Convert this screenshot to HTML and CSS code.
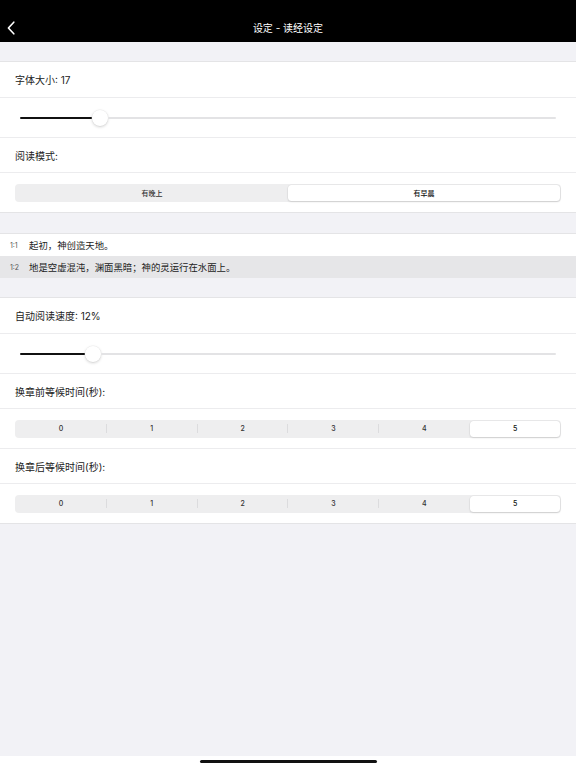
FILE: index.html
```html
<!DOCTYPE html>
<html lang="zh-CN">
<head>
<meta charset="utf-8">
<title>设定 - 读经设定</title>
<link rel="stylesheet" href="styles.css">
</head>
<body>
<div class="page">
  <header class="nav">
    <div class="nav-bar">
      <svg class="back" width="8" height="14" viewBox="0 0 8 14"><path d="M6.8 1.2 L1.4 7 L6.8 12.8" fill="none" stroke="#fff" stroke-width="1.6" stroke-linecap="round" stroke-linejoin="round"/></svg>
      <div class="title">设定 - 读经设定</div>
    </div>
  </header>

  <main class="content">
    <div class="gap gap-top"></div>
    <section class="group">
      <div class="row label-row">字体大小: 17</div>
      <div class="row control-row">
        <div class="slider">
          <div class="fill" style="width:72px"></div>
          <div class="thumb"></div>
          <div class="rest"></div>
        </div>
      </div>
      <div class="row label-row">阅读模式:</div>
      <div class="row control-row">
        <div class="seg">
          <div class="seg-item">有晚上</div>
          <div class="seg-item selected">有早晨</div>
        </div>
      </div>
    </section>

    <div class="gap"></div>
    <section class="group verses">
      <div class="verse"><span class="vnum">1:1</span><span class="vtext">起初，神创造天地。</span></div>
      <div class="verse hl"><span class="vnum">1:2</span><span class="vtext">地是空虚混沌，渊面黑暗；神的灵运行在水面上。</span></div>
    </section>

    <div class="gap gap-mid"></div>
    <section class="group">
      <div class="row label-row">自动阅读速度: 12%</div>
      <div class="row control-row">
        <div class="slider">
          <div class="fill" style="width:65px"></div>
          <div class="thumb"></div>
          <div class="rest"></div>
        </div>
      </div>
      <div class="row label-row">换章前等候时间(秒):</div>
      <div class="row control-row">
        <div class="seg">
          <div class="seg-item">0</div><div class="sep"></div>
          <div class="seg-item">1</div><div class="sep"></div>
          <div class="seg-item">2</div><div class="sep"></div>
          <div class="seg-item">3</div><div class="sep"></div>
          <div class="seg-item">4</div><div class="sep hidden"></div>
          <div class="seg-item selected">5</div>
        </div>
      </div>
      <div class="row label-row">换章后等候时间(秒):</div>
      <div class="row control-row">
        <div class="seg">
          <div class="seg-item">0</div><div class="sep"></div>
          <div class="seg-item">1</div><div class="sep"></div>
          <div class="seg-item">2</div><div class="sep"></div>
          <div class="seg-item">3</div><div class="sep"></div>
          <div class="seg-item">4</div><div class="sep hidden"></div>
          <div class="seg-item selected">5</div>
        </div>
      </div>
    </section>
  </main>

  <footer class="home">
    <div class="indicator"></div>
  </footer>
</div>
</body>
</html>
```

FILE: styles.css
```css
* { box-sizing: border-box; }
html, body { margin: 0; padding: 0; }
body {
  font-family: Inter, "Noto Sans CJK SC", "Noto Sans", sans-serif;
  color: #222;
  background: #f2f2f6;
}
.page {
  width: 576px;
  height: 768px;
  display: flex;
  flex-direction: column;
  overflow: hidden;
}
.nav {
  height: 42px;
  background: #000;
  flex: none;
  padding-top: 14px;
}
.nav-bar {
  height: 28px;
  display: flex;
  align-items: center;
  padding-left: 7px;
}
.back { display: block; }
.title {
  flex: 1;
  text-align: center;
  color: #fff;
  font-size: 10px;
  margin-left: -15px;
  margin-top: -2px;
}
.content {
  flex: 1;
  background: #f2f2f6;
}
.gap { height: 20px; }
.gap-top { height: 19px; }
.gap-mid { height: 19px; }
.group {
  background: #fff;
  border-top: 1px solid #e4e4e6;
  border-bottom: 1px solid #e4e4e6;
}
.row {
  display: flex;
  align-items: center;
}
.row + .row { border-top: 1px solid #ececee; }
.label-row {
  height: 35px;
  padding-left: 15px;
  font-size: 10px;
  color: #222;
}
.control-row {
  height: 40px;
}
.slider {
  margin: 0 20px;
  flex: 1;
  display: flex;
  align-items: center;
  height: 16px;
}
.fill {
  height: 2px;
  background: #111;
  border-radius: 1px;
}
.thumb {
  width: 16px;
  height: 16px;
  border-radius: 50%;
  background: #fff;
  box-shadow: 0 1px 3px rgba(0,0,0,0.18), 0 0 0 0.5px rgba(0,0,0,0.05);
  flex: none;
}
.rest {
  flex: 1;
  height: 2px;
  background: #e3e3e5;
  border-radius: 1px;
}
.seg {
  margin: 0 15px;
  flex: 1;
  height: 18px;
  background: #eeeeef;
  border-radius: 4px;
  padding: 1px;
  display: flex;
  align-items: center;
}
.seg-item {
  flex: 1;
  height: 16px;
  display: flex;
  align-items: center;
  justify-content: center;
  font-size: 7px;
  font-weight: 500;
  color: #333;
  border-radius: 3.5px;
}
.seg-item.selected {
  background: #fff;
  box-shadow: 0 1px 2px rgba(0,0,0,0.12), 0 0 0 0.5px rgba(0,0,0,0.05);
  color: #111;
}
.sep {
  width: 1px;
  height: 9px;
  background: #dcdcde;
  flex: none;
}
.sep.hidden { background: transparent; }
.verses { border-bottom: none; }
.verse {
  height: 22px;
  display: flex;
  align-items: center;
  padding-left: 10px;
  background: #fff;
}
.verse.hl { background: #e6e6e8; }
.vnum {
  width: 19px;
  font-size: 7px;
  color: #555;
}
.vtext {
  font-size: 9.4px;
  color: #222;
}
.home {
  height: 12px;
  background: #fff;
  flex: none;
  display: flex;
  justify-content: center;
  padding-top: 4px;
}
.indicator {
  width: 177px;
  height: 3px;
  border-radius: 2px;
  background: #111;
}
```
